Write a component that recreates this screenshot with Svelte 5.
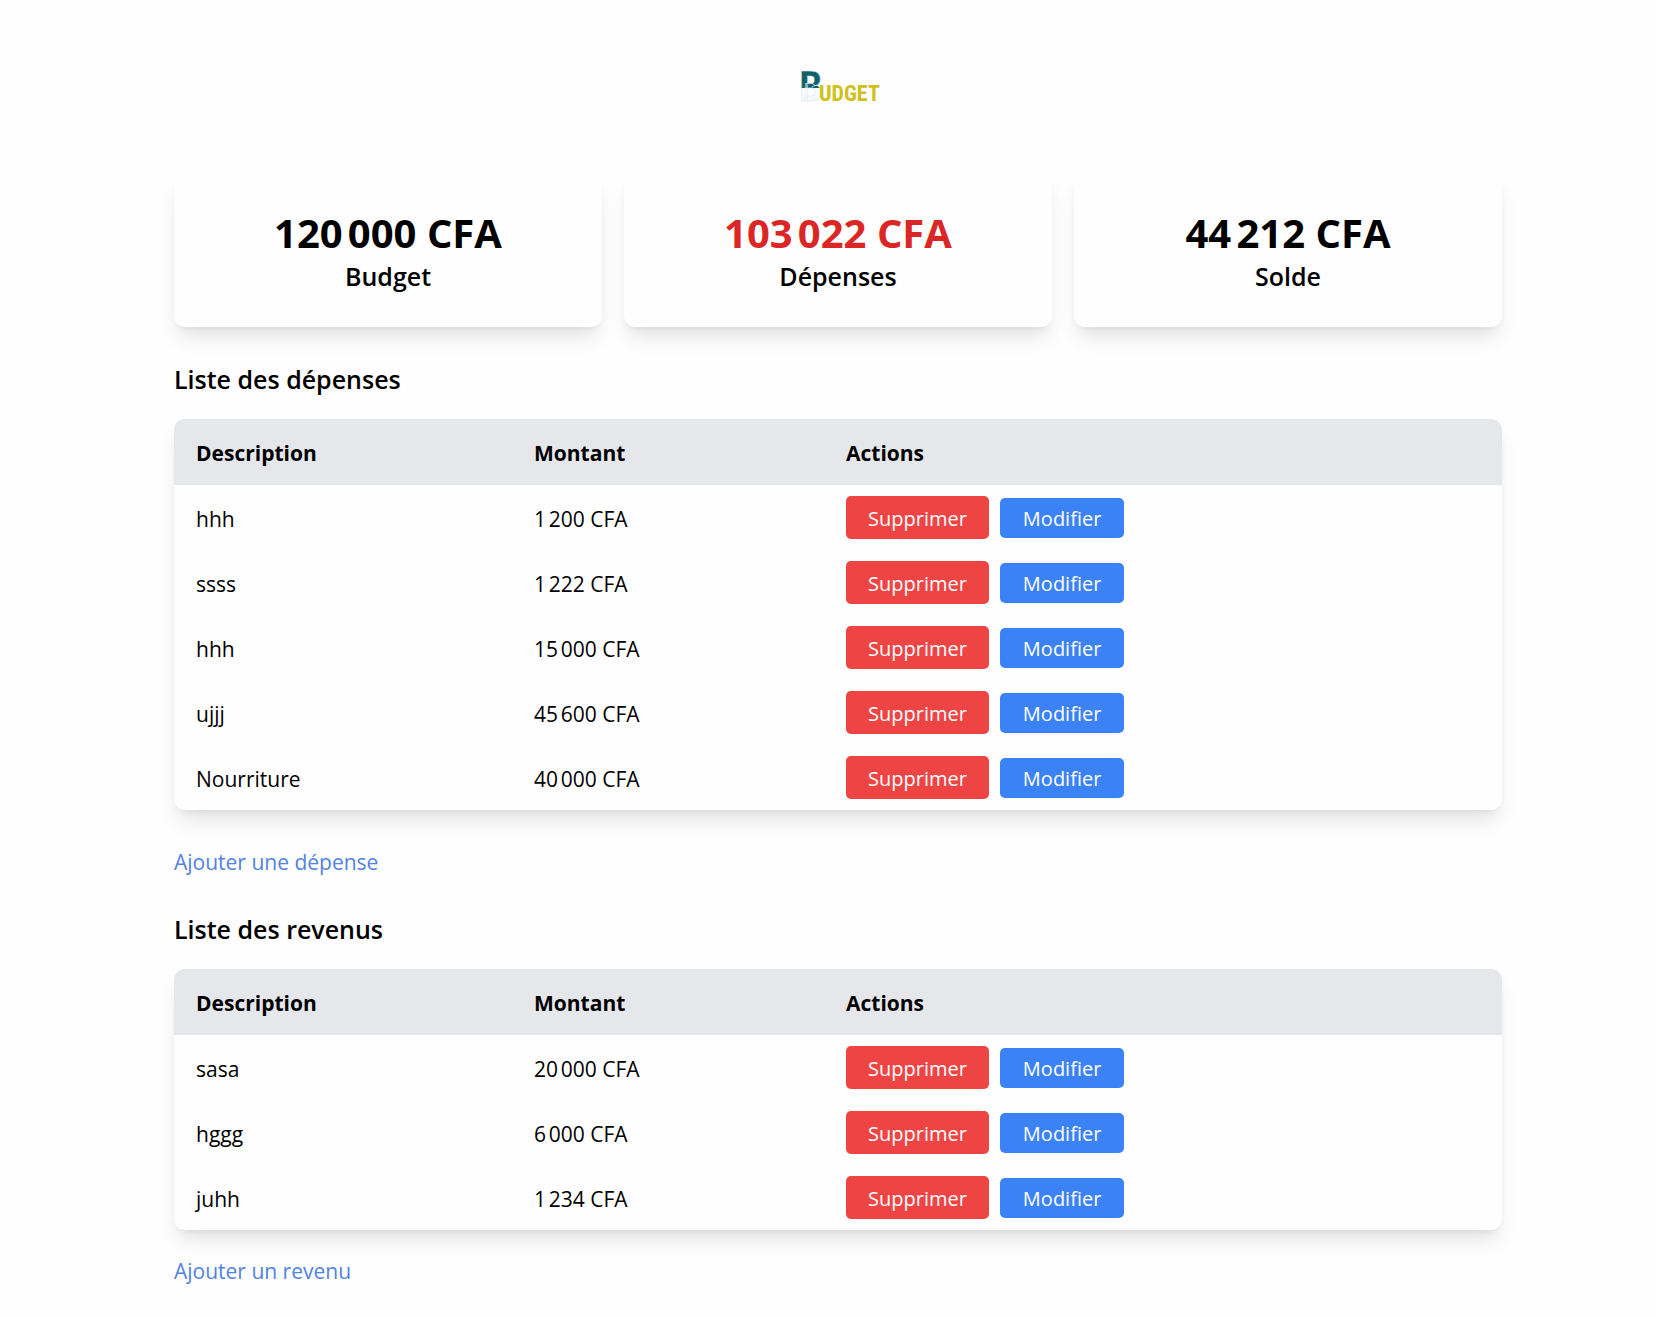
<script>
  const cards = [
    { amount: '120\u202f000 CFA', label: 'Budget' },
    { amount: '103\u202f022 CFA', label: 'Dépenses', negative: true },
    { amount: '44\u202f212 CFA', label: 'Solde' },
  ];

  const lists = [
    {
      id: 'depenses',
      title: 'Liste des dépenses',
      link: 'Ajouter une dépense',
      rows: [
        ['hhh', '1\u202f200 CFA'],
        ['ssss', '1\u202f222 CFA'],
        ['hhh', '15\u202f000 CFA'],
        ['ujjj', '45\u202f600 CFA'],
        ['Nourriture', '40\u202f000 CFA'],
      ],
    },
    {
      id: 'revenus',
      title: 'Liste des revenus',
      link: 'Ajouter un revenu',
      rows: [
        ['sasa', '20\u202f000 CFA'],
        ['hggg', '6\u202f000 CFA'],
        ['juhh', '1\u202f234 CFA'],
      ],
    },
  ];
</script>

<div class="page">
  <header>
    <svg class="logo" viewBox="0 0 76 38" role="img" aria-label="Budget">
      <defs>
        <linearGradient id="two-tone" x1="0" y1="0" x2="0" y2="38" gradientUnits="userSpaceOnUse">
          <stop offset="0.55" stop-color="#12606a" />
          <stop offset="0.55" stop-color="#f6f9fa" />
        </linearGradient>
      </defs>
      <text class="initial" x="-1" y="34" fill="url(#two-tone)">B</text>
      <text class="wordmark" x="19" y="34">UDGET</text>
    </svg>
  </header>

  <main>
    <section class="cards" aria-label="Résumé">
      {#each cards as card}
        <div class="card">
          <p class="amount" class:negative={card.negative}>{card.amount}</p>
          <p class="label">{card.label}</p>
        </div>
      {/each}
    </section>

    {#each lists as list}
      <section class="list {list.id}">
        <h2 id={list.id}>{list.title}</h2>
        <table aria-labelledby={list.id}>
          <thead>
            <tr>
              <th class="description" scope="col">Description</th>
              <th class="montant" scope="col">Montant</th>
              <th scope="col">Actions</th>
            </tr>
          </thead>
          <tbody>
            {#each list.rows as [name, amount]}
              <tr>
                <td>{name}</td>
                <td>{amount}</td>
                <td class="action-cell">
                  <div class="actions">
                    <button type="button">Supprimer</button>
                    <a class="edit" href="#{list.id}">Modifier</a>
                  </div>
                </td>
              </tr>
            {/each}
          </tbody>
        </table>
        <a class="add" href="#{list.id}">{list.link}</a>
      </section>
    {/each}
  </main>
</div>

<style>
  :global(body) {
    margin: 0;
    background: #fefefe;
  }

  .page {
    font-family: 'Segoe UI', 'Open Sans', 'Noto Sans', sans-serif;
    font-size: 21px;
    line-height: 33px;
    color: #000;
    padding: 0 154px 28px 174px;
  }

  header {
    display: flex;
    justify-content: center;
    padding: 67px 0 69px;
  }

  .logo {
    display: block;
    width: 76px;
    height: 38px;
    overflow: visible;
  }

  .initial,
  .wordmark {
    font-family: 'Roboto Condensed', 'Liberation Sans Narrow', 'Liberation Sans', sans-serif;
    font-weight: 700;
  }

  .initial {
    font-size: 42px;
    stroke: #dfe8ea;
    stroke-width: 0.5px;
  }

  .wordmark {
    font-size: 22px;
    fill: #d0c01c;
  }

  .cards {
    display: grid;
    grid-template-columns: repeat(3, 1fr);
    gap: 22px;
    margin-bottom: 33px;
  }

  .card,
  table {
    background: #fefefe;
    border-radius: 11px;
    box-shadow:
      0 14px 20px -4px rgba(0, 0, 0, 0.1),
      0 5px 8px -5px rgba(0, 0, 0, 0.1);
  }

  .card {
    padding: 34px 33px 32px;
    text-align: center;
  }

  p,
  h2 {
    margin: 0;
  }

  .amount {
    font-size: 40px;
    font-weight: 700;
    line-height: 49px;
  }

  .negative {
    color: #dc2626;
  }

  .label,
  h2 {
    font-size: 25px;
    font-weight: 600;
    line-height: 38px;
  }

  h2 {
    margin-bottom: 21px;
  }

  table {
    width: 100%;
    table-layout: fixed;
    border-collapse: separate;
    border-spacing: 0;
    overflow: hidden;
  }

  th,
  td {
    padding: 14px 22px 10px;
    text-align: left;
  }

  th {
    height: 42px;
    padding-top: 13px;
    padding-bottom: 11px;
    background: #e5e7eb;
    font-weight: 700;
  }

  .action-cell {
    padding-top: 11px;
    padding-bottom: 11px;
  }

  .description {
    width: 294px;
  }

  .montant {
    width: 268px;
  }

  .actions {
    display: flex;
    align-items: center;
    gap: 11px;
  }

  button,
  .edit {
    box-sizing: border-box;
    padding: 2px 22px 0;
    border: 0;
    border-radius: 5px;
    font: inherit;
    font-size: 20px;
    color: #fff;
    text-decoration: none;
  }

  button {
    height: 43px;
    background: #ef4444;
  }

  .edit {
    height: 40px;
    padding: 0 23px;
    line-height: 41px;
    background: #3b82f6;
  }

  .add {
    display: inline-block;
    color: #5282e4;
    text-decoration: none;
  }

  .depenses .add {
    margin: 36px 0 31px;
  }

  .revenus .add {
    margin-top: 25px;
  }
</style>
